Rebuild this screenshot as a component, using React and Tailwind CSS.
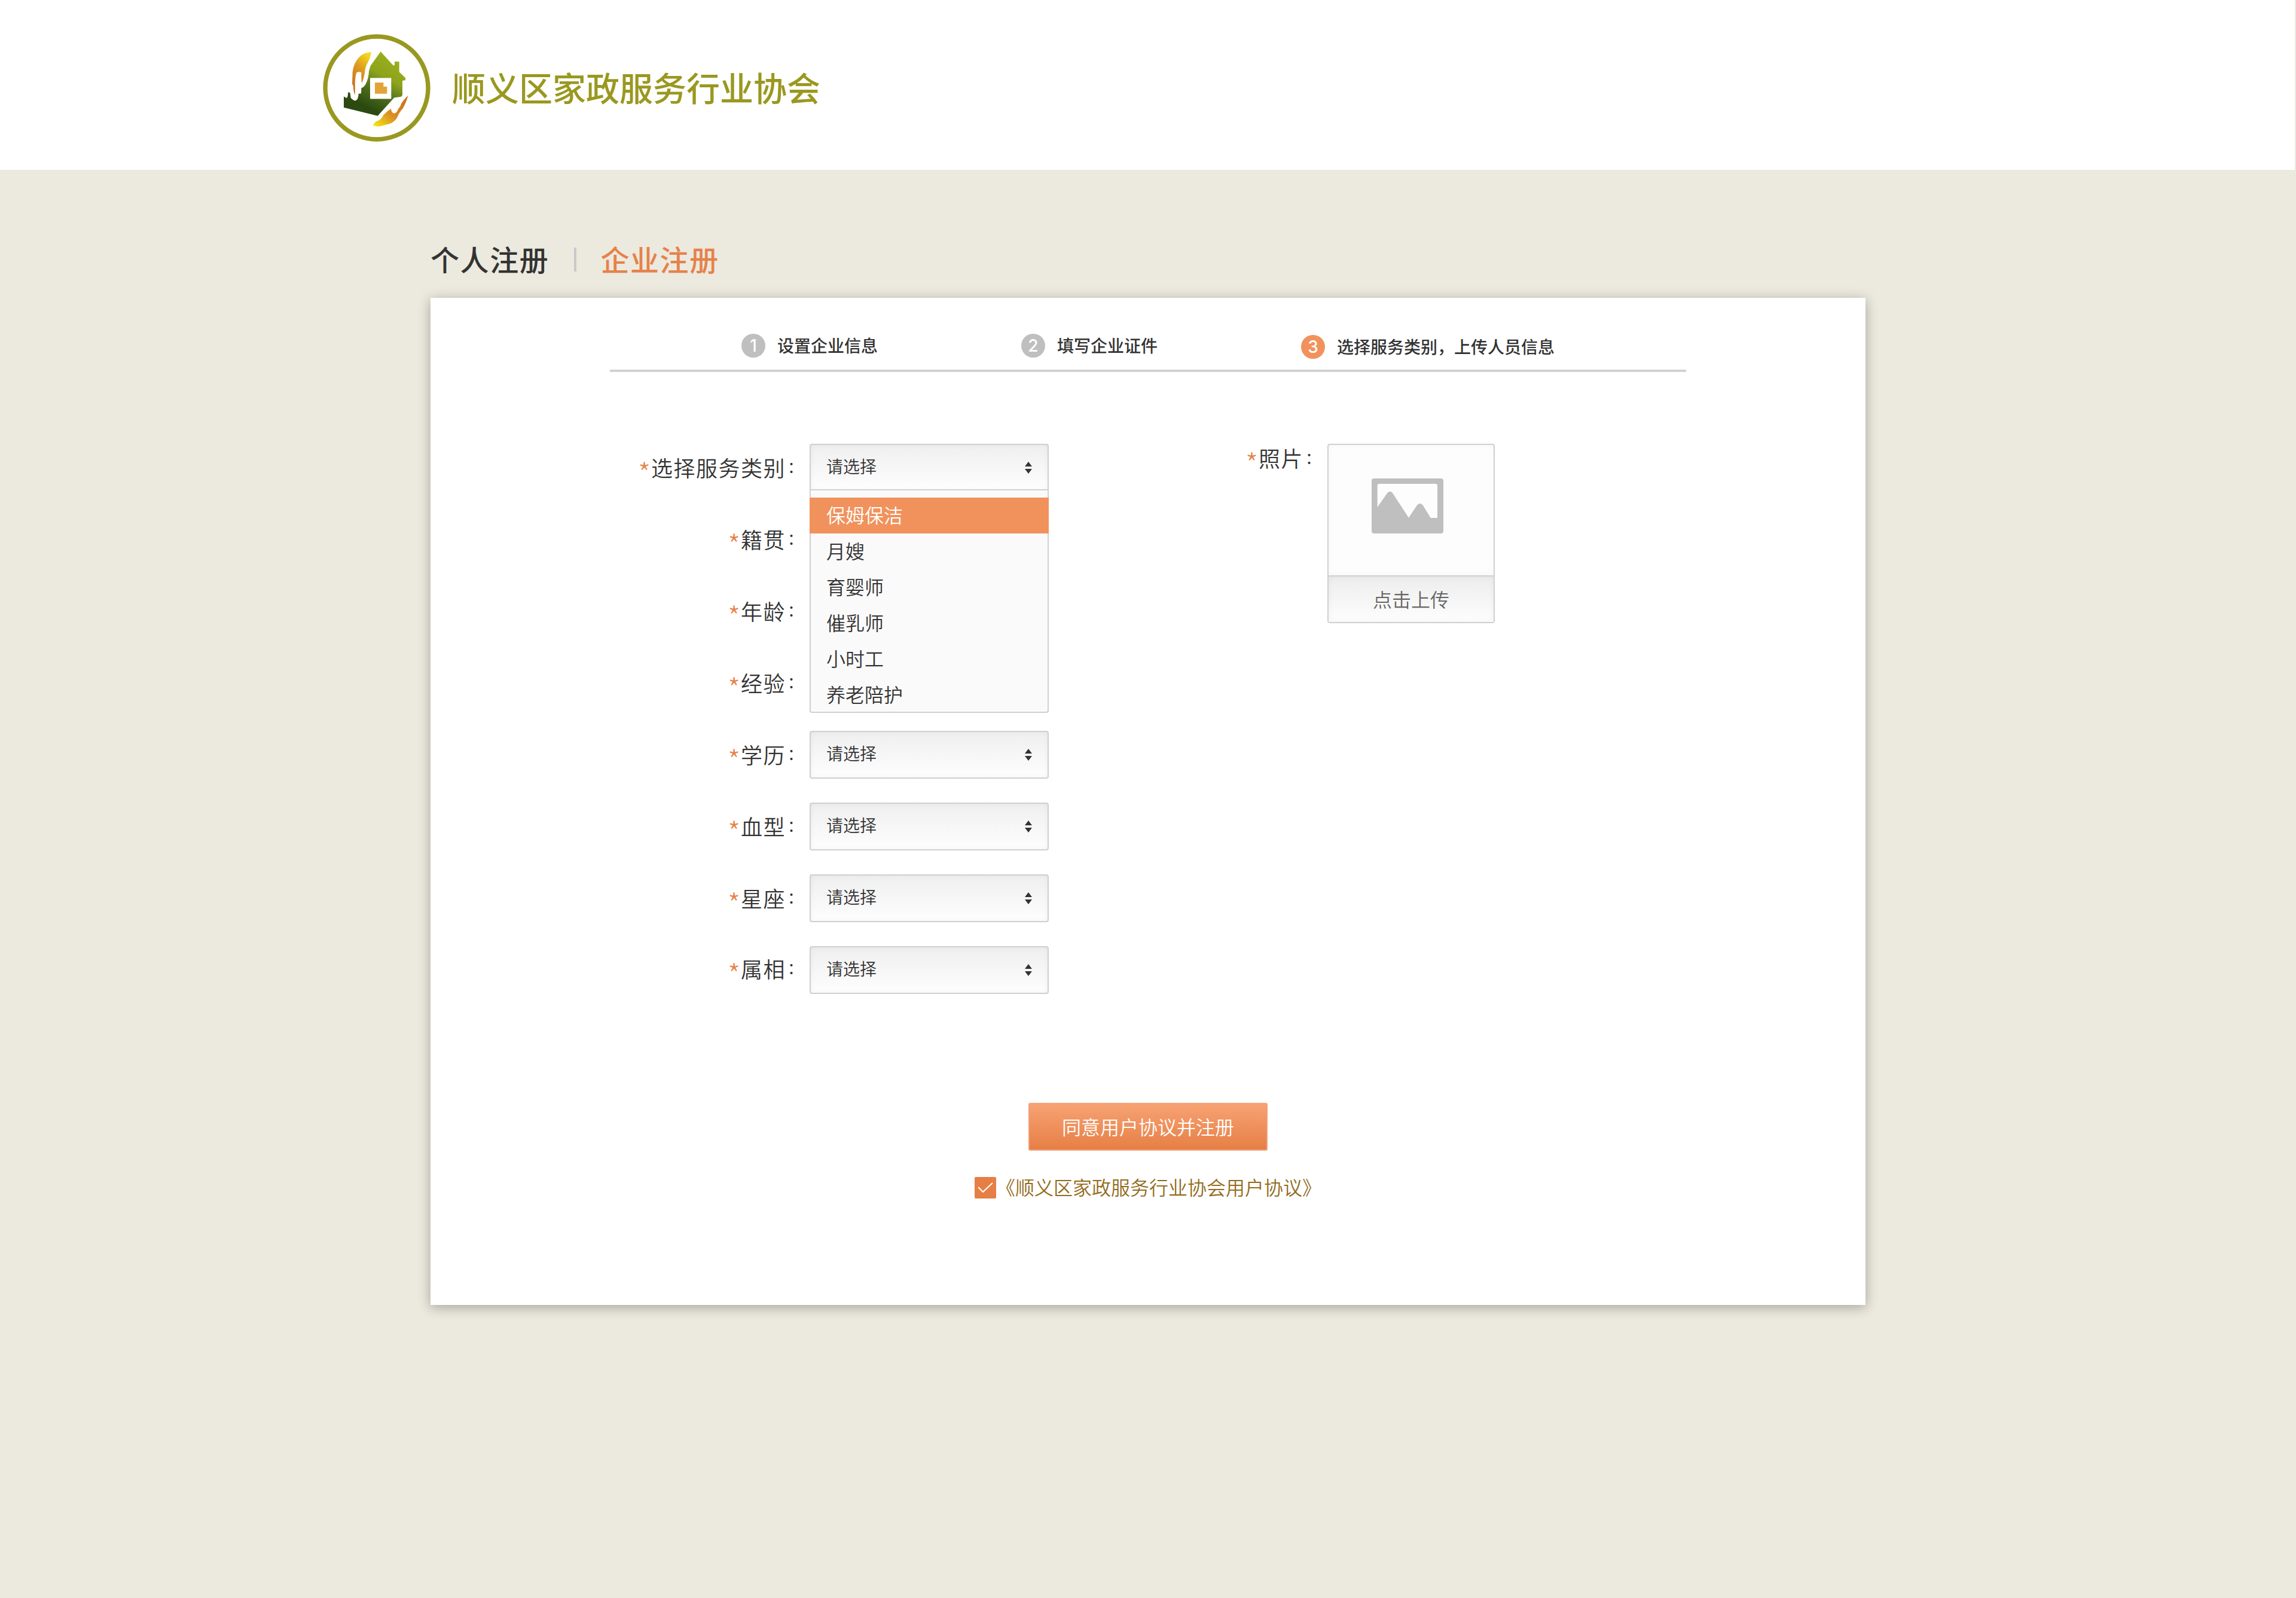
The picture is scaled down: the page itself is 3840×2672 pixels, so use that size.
const STEPS = [
  { n: 1, label: '设置企业信息' },
  { n: 2, label: '填写企业证件' },
  { n: 3, label: '选择服务类别，上传人员信息', active: true },
];

// The open menu of the first field covers the controls of the rows marked `covered`.
const FIELDS = [
  { name: '选择服务类别', open: true },
  { name: '籍贯', covered: true },
  { name: '年龄', covered: true },
  { name: '经验', covered: true },
  { name: '学历' },
  { name: '血型' },
  { name: '星座' },
  { name: '属相', raised: true },
];
const OPTIONS = ['保姆保洁', '月嫂', '育婴师', '催乳师', '小时工', '养老陪护'];

function Logo() {
  return (
    <svg className="size-[180px]" viewBox="60 50 540 540">
      <defs>
        <linearGradient id="house" x1="0.75" y1="0.1" x2="0.35" y2="0.85">
          <stop offset="0" stopColor="#9aae1c" />
          <stop offset="0.35" stopColor="#8ca31c" />
          <stop offset="0.65" stopColor="#51701a" />
          <stop offset="1" stopColor="#2c4a10" />
        </linearGradient>
        <linearGradient id="handTop" x1="0.7" y1="0" x2="0.3" y2="1">
          <stop offset="0" stopColor="#f3d91c" />
          <stop offset="0.4" stopColor="#dd9c20" />
          <stop offset="1" stopColor="#c4661f" />
        </linearGradient>
        <linearGradient id="handBottom" x1="0" y1="1" x2="1" y2="0">
          <stop offset="0" stopColor="#f8ea10" />
          <stop offset="0.45" stopColor="#d98e22" />
          <stop offset="1" stopColor="#c96a20" />
        </linearGradient>
      </defs>
      <circle cx="330" cy="320" r="258" fill="#fff" stroke="#999820" strokeWidth="22" />
      <path
        fill="url(#house)"
        d="M350 138 L414 208 L420 205 L420 188 L443 188 L443 240 L474 270 L474 281 L459 284 L459 352 Q459 362 448 365 L418 369 L335 460 L165 418 L165 363 L177 370 Q186 370 186 343 Q191 340 197 346 L200 370 Q214 384 224 384 Q238 378 239 349 L252 348 L253 320 Q268 316 276 298 Q290 270 291 235 L299 209 Z"
      />
      <path
        fill="url(#handTop)"
        d="M303 142 Q268 140 243 165 Q214 196 209 240 L207 300 L213 311 Q212 335 221 356 Q222 320 221 300 Q222 262 229 243 Q242 236 253 243 Q252 275 255 295 Q263 286 271 240 Q272 215 286 192 Q297 170 303 142 Z"
      />
      <path
        fill="url(#handBottom)"
        d="M312 508 Q318 491 335 486 Q352 480 364 456 Q382 436 402 424 Q403 443 417 448 Q430 447 437 428 Q449 415 455 396 Q472 372 487 359 Q480 388 462 422 Q444 440 433 468 Q418 494 392 501 L346 513 Q326 514 312 508 Z"
      />
      <rect x="297" y="270" width="106" height="105" fill="#fff" />
      <path fill="#e2a439" d="M321 293 H364 V313 H382 V349 H321 Z" />
    </svg>
  );
}

function Label({ children }) {
  return (
    <div className="flex h-[63px] items-center text-[36px] leading-[54px] whitespace-nowrap">
      <span className="mt-[13px] ml-[-2px] w-[22px] text-[48px] font-light text-[#e5824a]">*</span>
      <span className="mt-[-3px] tracking-[1.5px]">{children}</span>
      <span className="mt-[-4px] w-[40px] pl-[3px] text-[26px] font-normal">：</span>
    </div>
  );
}

function Select({ open }) {
  return (
    <div
      className={
        'flex h-[80px] w-[400px] items-center justify-between border-2 border-[#d0d0d0] bg-linear-to-b from-[#efefef] to-[#fefefe] pr-[26px] pl-[26px] shadow-[inset_0_0_10px_rgba(0,0,0,0.05)] ' +
        (open ? 'rounded-t-[4px]' : 'rounded-[4px]')
      }
    >
      <span className="pb-[7px] text-[28px] leading-[40px]">请选择</span>
      <svg className="h-[20px] w-[12px]" viewBox="0 0 12 20" fill="#333">
        <path d="M6 0 L12 8 H0 Z M0 12 H12 L6 20 Z" />
      </svg>
    </div>
  );
}

function Dropdown() {
  return (
    <ul className="absolute top-[76px] left-0 z-10 w-[400px] rounded-b-[4px] bg-[#fafafa] text-[32px]">
      <li className="h-[14px] border-x-2 border-t-2 border-[#d0d0d0]" />
      {OPTIONS.map((option, i) => (
        <li
          key={option}
          className={
            'flex h-[60px] items-center ' +
            (i === 0
              ? 'bg-[#f1925c] pl-[28px] text-white'
              : i === OPTIONS.length - 1
                ? 'rounded-b-[4px] border-x-2 border-b-2 border-[#d0d0d0] pt-[2px] pl-[26px]'
                : 'border-x-2 border-[#d0d0d0] pl-[26px]')
          }
        >
          <span className="mt-[-4px] leading-[48px]">{option}</span>
        </li>
      ))}
    </ul>
  );
}

function PhotoUpload() {
  return (
    <div className="flex h-[300px] w-[280px] flex-col rounded-[4px] border-2 border-[#d0d0d0] bg-[#fdfdfd]">
      <div className="flex h-[218px] justify-center pt-[56px] pr-[12px] shadow-[inset_0_0_12px_rgba(0,0,0,0.03)]">
        <svg className="h-[92px] w-[120px]" viewBox="0 0 360 276">
          <rect width="360" height="276" rx="12" fill="#bfbfbf" />
          <path
            fill="#fdfdfd"
            d="M29 144 V37 Q29 27 39 27 H320 Q330 27 330 37 V198 H296 L257 134 Q252 126 243 126 Q235 126 229 133 L186 197 L105 73 Q100 65 92 65 Q85 65 79 73 Z"
          />
        </svg>
      </div>
      <div className="flex h-[78px] items-center justify-center border-t-2 border-[#d0d0d0] bg-linear-to-b from-[#ededed] to-[#fefefe] pb-[3px] text-[32px] leading-[48px] text-[#666] shadow-[inset_0_0_12px_rgba(0,0,0,0.05)]">
        点击上传
      </div>
    </div>
  );
}

export default function App() {
  return (
    <div className="h-[2672px] w-[3840px] overflow-hidden bg-[#ece9de] font-['Noto_Sans_CJK_SC',sans-serif] font-[350] text-[#333]">
      <header className="flex h-[284px] w-[3838px] items-start bg-white pt-[57px] pl-[540px]">
        <Logo />
        <h1 className="mt-[46px] ml-[36px] text-[56px] leading-[84px] font-medium text-[#9a981f]">
          顺义区家政服务行业协会
        </h1>
      </header>

      <nav className="flex h-[214px] pt-[130px] pl-[720px] text-[48px] leading-[72px] font-medium tracking-[1.6px]">
        <a className="mt-[-18px]">个人注册</a>
        <span className="ml-[42px] h-[40px] w-[4px] bg-[#c9c9cb]" />
        <a className="mt-[-18px] ml-[40px] text-[#e5824a]">企业注册</a>
      </nav>

      <main className="ml-[720px] flex h-[1684px] w-[2400px] flex-col bg-white shadow-[0_4px_20px_rgba(0,0,0,0.3)]">
        <ol className="mx-auto flex h-[124px] w-[1800px] border-b-4 border-[#d2d2d2] pt-[60px] pl-[220px]">
          {STEPS.map((s) => (
            <li
              key={s.n}
              className={
                'flex h-[40px] w-[468px] shrink-0 items-center whitespace-nowrap ' + (s.active ? 'mt-[2px]' : '')
              }
            >
              <span
                className={
                  "flex size-[40px] items-center justify-center rounded-full font-['Inter',sans-serif] text-[28px] leading-none font-medium text-white " +
                  (s.active ? 'bg-[#f1925c]' : 'bg-[#bfbfbf]')
                }
              >
                {s.n}
              </span>
              <span className="mt-[-3px] ml-[20px] text-[28px] leading-[40px] font-medium">{s.label}</span>
            </li>
          ))}
        </ol>

        <div className="flex items-start pt-[120px]">
          <div className="flex flex-col gap-[40px]">
            {FIELDS.map((field) => (
              <div key={field.name} className="flex h-[80px] w-[1034px] items-center">
                <div className={'flex w-[634px] shrink-0 justify-end ' + (field.raised ? 'pb-[4px]' : '')}>
                  <Label>{field.name}</Label>
                </div>
                {!field.covered && (
                  <div className="relative">
                    <Select open={field.open} />
                    {field.open && <Dropdown />}
                  </div>
                )}
              </div>
            ))}
          </div>
          <div className="mt-[-7px] flex w-[466px] justify-end">
            <Label>照片</Label>
          </div>
          <PhotoUpload />
        </div>

        <div className="flex flex-col items-center pt-[182px]">
          <button className="flex h-[80px] w-[400px] items-center justify-center rounded-[3px] border-2 border-[#f0a079] border-t-[#f6a477] bg-linear-to-b from-[#f7a273] to-[#e67f45] pb-[3px] text-[32px] leading-[48px] text-white">
            同意用户协议并注册
          </button>
          <div className="mt-[44px] flex h-[36px] items-center text-[32px] leading-[48px] text-[#926b1c]">
            <span className="flex size-[36px] items-center justify-center rounded-[2px] bg-[#e67f45]">
              <svg className="h-[18px] w-[26px]" viewBox="0 0 26 18" fill="none" stroke="#fff" strokeWidth="2">
                <path d="M1 8 L9 16 L25 1" />
              </svg>
            </span>
            <span className="mt-[-4px]">《顺义区家政服务行业协会用户协议》</span>
          </div>
        </div>
      </main>
    </div>
  );
}
